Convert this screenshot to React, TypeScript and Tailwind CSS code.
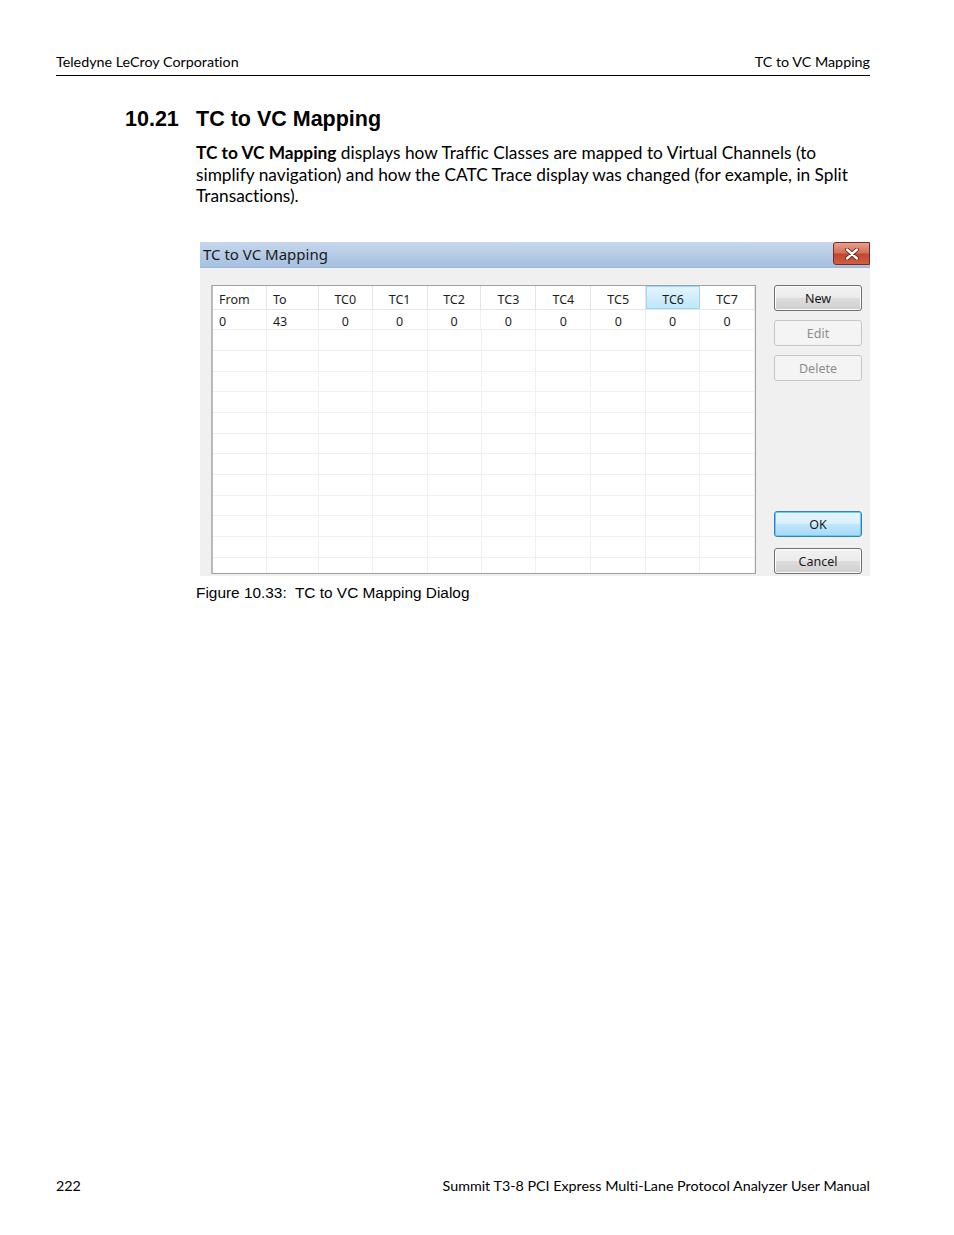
import React from "react";

const cols = ["From", "To", "TC0", "TC1", "TC2", "TC3", "TC4", "TC5", "TC6", "TC7"];
const widths = [54, 52, 54, 55, 54, 55, 55, 55, 54, 55];
const firstRow = ["0", "43", "0", "0", "0", "0", "0", "0", "0", "0"];

function Btn({ label, kind }: { label: string; kind: "normal" | "disabled" | "default" }) {
  if (kind === "disabled") {
    return (
      <div className="w-[88px] h-[26px] pt-[4px] rounded-[3px] border border-[#c4c7c9] bg-[#f4f4f4] flex items-center justify-center text-[12.5px] text-[#8d8d8d]">
        {label}
      </div>
    );
  }
  if (kind === "default") {
    return (
      <div className="w-[88px] h-[26px] pt-[4px] rounded-[3px] border border-[#3c7fb1] shadow-[inset_0_0_0_1px_#5fd0f5] bg-[linear-gradient(#e7f5fd_0%,#d9f0fc_50%,#bee6fd_51%,#a7d9f5_100%)] flex items-center justify-center text-[12.5px] text-[#1a1a1a]">
        {label}
      </div>
    );
  }
  return (
    <div className="w-[88px] h-[26px] pt-[4px] rounded-[3px] border border-[#707070] shadow-[inset_0_0_0_1px_#fcfcfc] bg-[linear-gradient(#f2f2f2_0%,#ebebeb_50%,#dddddd_51%,#cfcfcf_100%)] flex items-center justify-center text-[12.5px] text-[#1a1a1a]">
      {label}
    </div>
  );
}

export default function App() {
  const emptyRows = Array.from({ length: 12 });
  return (
    <div className="w-[954px] h-[1235px] bg-white flex flex-col font-['Lato','Open_Sans',sans-serif] [font-variant-ligatures:none] text-black">
      {/* header */}
      <div className="pt-[53px] pl-[56px] pr-[84px]">
        <div className="flex justify-between text-[14.3px] leading-[18px] pb-[4px] border-b border-black">
          <span>Teledyne LeCroy Corporation</span>
          <span>TC to VC Mapping</span>
        </div>
      </div>

      {/* heading */}
      <div className="mt-[30px] pl-[125px] flex font-['Liberation_Sans',Arial,sans-serif] font-bold text-[21.5px] leading-[26px]">
        <span className="w-[71px]">10.21</span>
        <span>TC to VC Mapping</span>
      </div>

      {/* paragraph */}
      <div className="mt-[10px] pl-[196px] pr-[60px] text-[17.3px] leading-[21.5px]">
        <span className="font-bold">TC to VC Mapping</span> displays how Traffic Classes are mapped to Virtual Channels (to
        <br />
        simplify navigation) and how the CATC Trace display was changed (for example, in Split
        <br />
        Transactions).
      </div>

      {/* dialog */}
      <div className="mt-[35px] ml-[200px] w-[670px] h-[334px] flex flex-col bg-[#f0f0f0] font-['Noto_Sans','Open_Sans',sans-serif] overflow-hidden">
        <div className="h-[26px] flex items-center justify-between bg-[linear-gradient(#c6d7ec,#a5c0e0)] border-b border-[#9fb7d3]">
          <span className="pl-[3px] text-[15px] text-[#1a1a1a] leading-none">TC to VC Mapping</span>
          <div className="w-[37px] h-[23px] mb-[1px] rounded-l-[3px] border border-[#7a2b1f] bg-[linear-gradient(#e7a08f_0%,#d5715a_45%,#c4452c_55%,#cf6046_100%)] flex items-center justify-center">
            <svg width="14" height="12" viewBox="0 0 14 12">
              <path d="M2 1.5 L12 10.5 M12 1.5 L2 10.5" stroke="#5a1a10" strokeWidth="4" strokeLinecap="round" />
              <path d="M2 1.5 L12 10.5 M12 1.5 L2 10.5" stroke="#ffffff" strokeWidth="2.4" strokeLinecap="round" />
            </svg>
          </div>
        </div>
        <div className="flex-1 flex pl-[11px] pt-[17px] pb-[2px]">
          {/* grid */}
          <div className="w-[545px] h-[289px] border border-[#a0a0a0] border-l-[2px] border-l-[#b9b9b9] bg-white flex flex-col overflow-hidden text-[12.5px] text-[#1e1e1e]">
            <div className="flex h-[24px] shrink-0 border-b border-[#e5e5e5]">
              {cols.map((c, i) => (
                <div
                  key={c}
                  style={{ width: widths[i] }}
                  className={
                    "flex items-center pt-[6px] border-r " +
                    (i < 2 ? "justify-start pl-[6px] " : "justify-center ") +
                    (c === "TC6"
                      ? "bg-[linear-gradient(#e3f4fc,#bfe7fa)] border border-[#96d9f9]"
                      : "border-[#e5e5e5]")
                  }
                >
                  {c}
                </div>
              ))}
            </div>
            <div className="flex h-[20.7px] shrink-0 border-b border-[#f0f0f0]">
              {firstRow.map((v, i) => (
                <div
                  key={i}
                  style={{ width: widths[i] }}
                  className={
                    "flex items-center pt-[6px] border-r border-[#f0f0f0] " + (i < 2 ? "justify-start pl-[6px]" : "justify-center")
                  }
                >
                  {v}
                </div>
              ))}
            </div>
            {emptyRows.map((_, r) => (
              <div key={r} className="flex h-[20.7px] shrink-0 border-b border-[#f0f0f0]">
                {widths.map((w, i) => (
                  <div key={i} style={{ width: w }} className="border-r border-[#f0f0f0]" />
                ))}
              </div>
            ))}
          </div>
          {/* buttons */}
          <div className="ml-[18px] flex flex-col">
            <div className="flex flex-col gap-[9px]">
              <Btn label="New" kind="normal" />
              <Btn label="Edit" kind="disabled" />
              <Btn label="Delete" kind="disabled" />
            </div>
            <div className="mt-[130px] flex flex-col gap-[11px]">
              <Btn label="OK" kind="default" />
              <Btn label="Cancel" kind="normal" />
            </div>
          </div>
        </div>
      </div>

      {/* caption */}
      <div className="mt-[8px] pl-[196px] font-['Liberation_Sans',Arial,sans-serif] text-[15.4px] leading-[18px]">
        Figure 10.33:&nbsp; TC to VC Mapping Dialog
      </div>

      <div className="flex-1" />

      {/* footer */}
      <div className="pl-[56px] pr-[84px] pb-[40px] flex justify-between text-[14.3px] leading-[18px]">
        <span>222</span>
        <span>Summit T3-8 PCI Express Multi-Lane Protocol Analyzer User Manual</span>
      </div>
    </div>
  );
}
